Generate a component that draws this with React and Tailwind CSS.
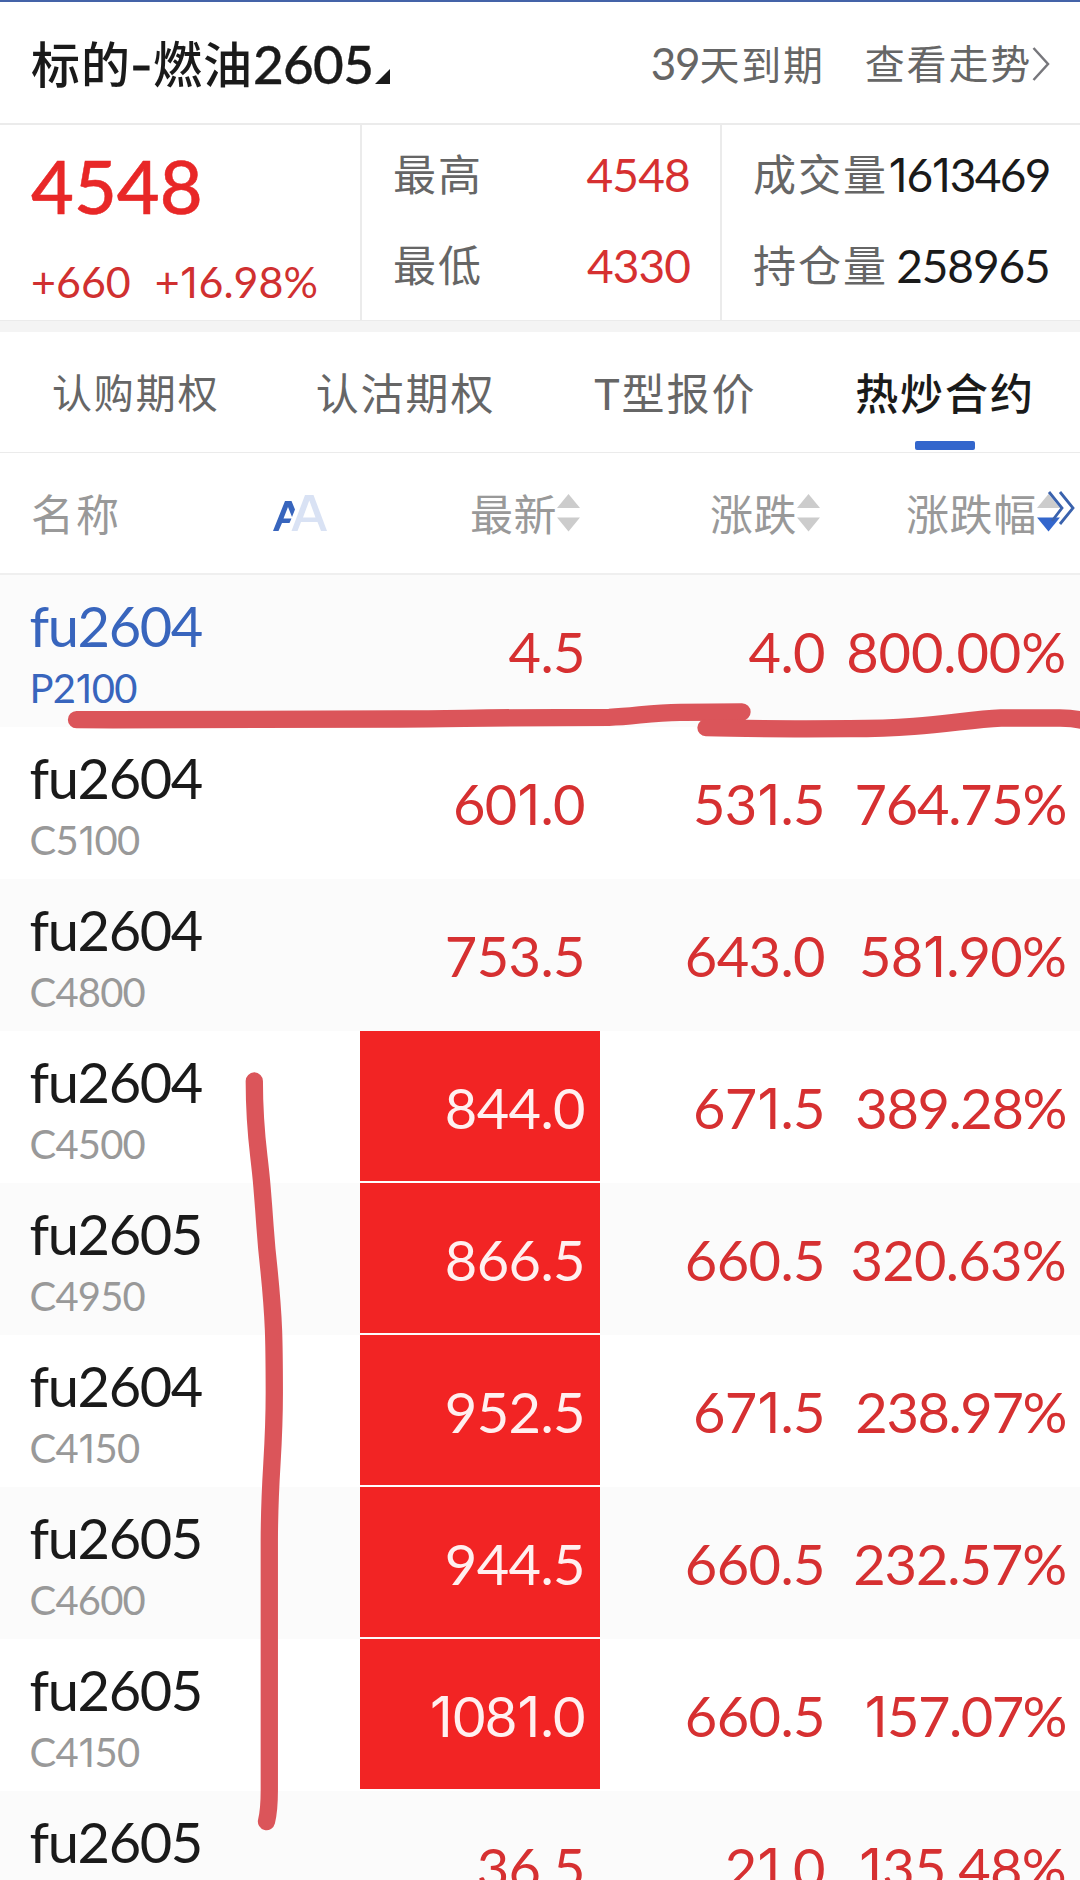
const rows = [
  { name: 'fu2604', code: 'P2100', last: '4.5', change: '4.0', pct: '800.00%', active: true, fit: 'tracking-[-0.1px]' },
  { name: 'fu2604', code: 'C5100', last: '601.0', change: '531.5', pct: '764.75%', fit: 'tracking-[-1.3px]' },
  { name: 'fu2604', code: 'C4800', last: '753.5', change: '643.0', pct: '581.90%', fit: 'tracking-[-0.8px]' },
  { name: 'fu2604', code: 'C4500', last: '844.0', change: '671.5', pct: '389.28%', flash: true, fit: 'tracking-[-1.4px]' },
  { name: 'fu2605', code: 'C4950', last: '866.5', change: '660.5', pct: '320.63%', flash: true, fit: 'tracking-[-0.7px]' },
  { name: 'fu2604', code: 'C4150', last: '952.5', change: '671.5', pct: '238.97%', flash: true, fit: 'tracking-[-1.4px]' },
  { name: 'fu2605', code: 'C4600', last: '944.5', change: '660.5', pct: '232.57%', flash: true, fit: 'tracking-[-1.1px]' },
  { name: 'fu2605', code: 'C4150', last: '1081.0', change: '660.5', pct: '157.07%', flash: true, fit: 'tracking-[-1.5px]' },
  { name: 'fu2605', code: '', last: '36.5', change: '21.0', pct: '135.48%', fit: 'tracking-[-0.7px]' },
]

// Lato has tabular figures only; Inter's 1 is narrow and has no foot
function Num({ children }) {
  return children.split(/(1)/).map((part, i) =>
    part === '1' ? <span key={i} className="font-[Inter] mx-[0.015em]">1</span> : part
  )
}

function SortArrows({ down = '#cccccc' }) {
  return (
    <svg width="23" height="38" viewBox="0 0 23 38" className="shrink-0">
      <path d="M0 14 L11.5 0 L23 14 Z" fill="#cccccc" />
      <path d="M0 23.5 L11.5 37.5 L23 23.5 Z" fill={down} />
    </svg>
  )
}

function Header() {
  return (
    <header className="h-[125px] shrink-0 border-t-2 border-t-[#4463a8] border-b-2 border-b-[#ebebeb] pl-[31px] pr-[30px] pt-[2px] flex items-center">
      <h1 className="text-[49px] leading-[60px] font-medium tracking-[1px] text-[#1a1a1a] flex items-center whitespace-nowrap">
        <span>标的</span>
        <span className="w-[22px] text-center scale-x-125 [-webkit-text-stroke:0.8px_#1a1a1a]">-</span>
        <span>燃油</span>
        <span className="text-[53px] tracking-[-0.7px] [-webkit-text-stroke:0.4px_#1a1a1a]">2605</span>
        <svg width="15" height="15" viewBox="0 0 15 15" className="mt-[25px] ml-[2px]">
          <path d="M15 0 V15 H0 Z" fill="#1a1a1a" />
        </svg>
      </h1>
      <div className="ml-auto flex items-center text-[40px] leading-[50px] tracking-[1.8px] text-[#666666] whitespace-nowrap">
        <span><span className="text-[44px] tracking-[-1.2px]">39</span>天到期</span>
        <span className="ml-[40px]">查看走势</span>
        <svg width="18" height="34" viewBox="0 0 18 34" fill="none" stroke="#77777c" strokeWidth="2.5">
          <path d="M1.5 1 L16 17 L1.5 33" />
        </svg>
      </div>
    </header>
  )
}

function Quote() {
  return (
    <section className="h-[195px] shrink-0 flex text-[43px] leading-[60px] text-[#666666] whitespace-nowrap">
      <div className="w-[362px] shrink-0 border-r-2 border-[#ebebeb] pl-[31px] pt-[17px]">
        <div className="text-[74px] leading-[88px] font-medium text-[#e82727] [-webkit-text-stroke:0.5px_#e82727]">4548</div>
        <div className="mt-[22px] leading-[60px] flex gap-[24px] text-[#d03030] text-[43px]">
          <span>+660</span>
          <span><Num>+16.98%</Num></span>
        </div>
      </div>
      <div className="w-[360px] shrink-0 border-r-2 border-[#ebebeb] pl-[31px] pr-[30px] pt-[20px]">
        <div className="flex justify-between h-[91px]">
          <span className="tracking-[2px]">最高</span>
          <span className="text-[46px] tracking-[-0.8px] text-[#d63031]">4548</span>
        </div>
        <div className="flex justify-between">
          <span className="tracking-[2px]">最低</span>
          <span className="text-[46px] tracking-[-0.9px] text-[#d63031]">4330</span>
        </div>
      </div>
      <div className="flex-1 pl-[31px] pr-[31px] pt-[20px]">
        <div className="flex justify-between h-[91px]">
          <span className="tracking-[2px]">成交量</span>
          <span className="text-[46px] text-[#1a1a1a] tracking-[-1.7px]"><Num>1613469</Num></span>
        </div>
        <div className="flex justify-between">
          <span className="tracking-[2px]">持仓量</span>
          <span className="text-[46px] text-[#1a1a1a] tracking-[-1.1px]">258965</span>
        </div>
      </div>
    </section>
  )
}

function Tabs() {
  return (
    <nav className="h-[121px] shrink-0 border-b border-[#ebebeb] pl-[1px] grid grid-cols-4 justify-items-center text-[43px] leading-[123px] tracking-[2px] text-[#666666] whitespace-nowrap">
      <span className="text-[40px]">认购期权</span>
      <span>认沽期权</span>
      <span>T型报价</span>
      <span className="relative font-medium text-[#1a1a1a]">
        热炒合约
        <i className="absolute left-[60px] top-[109px] w-[60px] h-[9px] rounded-[2px] bg-[#3366cc]" />
      </span>
    </nav>
  )
}

function TableHead() {
  return (
    <div className="h-[122px] shrink-0 border-b-2 border-[#efefef] flex items-center text-[43px] leading-[60px] tracking-[2px] text-[#999999] whitespace-nowrap">
      <div className="w-[360px] pl-[31px] flex items-center">
        <span className="pt-[3px]">名称</span>
        <svg width="54" height="36" viewBox="0 0 54 36" className="ml-auto mr-[33px]">
          <path fillRule="evenodd" fill="#3865bd" d="M0 36 L12 6 H18.5 L22 14.5 L19 22 L15 12 L10.5 23.5 H18.5 L16.5 28 H9 L5.5 36 Z" />
          <path fillRule="evenodd" fill="#d9e2f4" d="M18.5 36 L32 0 H40.5 L54 36 H48 L44.5 27 H28 L24.5 36 Z M30 22.5 H42.5 L36.3 5.5 Z" />
        </svg>
      </div>
      <div className="w-[240px] pr-[20px] flex items-center justify-end"><span className="pt-[3px] tracking-[0.5px]">最新</span><SortArrows /></div>
      <div className="w-[240px] pr-[20px] flex items-center justify-end"><span className="pt-[3px] tracking-[0.5px]">涨跌</span><SortArrows /></div>
      <div className="relative w-[240px] pr-[20px] flex items-center justify-end">
        <span className="pt-[3px] tracking-[0.7px]">涨跌幅</span><SortArrows down="#3366cc" />
        <svg width="28" height="34" viewBox="0 0 28 34" fill="none" stroke="#3a62ad" strokeWidth="2.8" className="absolute right-[5px] top-[9px]">
          <path d="M2 1 L15 17 L5 30" />
          <path d="M13 1 L26 17 L13 33" />
        </svg>
      </div>
    </div>
  )
}

function Row({ row }) {
  return (
    <div className="h-[152px] shrink-0 flex odd:bg-[#fbfbfb] text-[56px] leading-[154px] tracking-[-0.6px] text-[#d63031] whitespace-nowrap">
      <div className={`w-[360px] pl-[29.5px] pt-[18px] ${row.active ? 'text-[#3865bd]' : 'text-[#1a1a1a]'}`}>
        <div className="leading-[66px] tracking-[-1.4px]">{row.name}</div>
        {row.code && (
          <div className={`text-[40px] leading-[58px] tracking-[-0.8px] ${row.active ? '' : 'text-[#999999]'}`}><Num>{row.code}</Num></div>
        )}
      </div>
      <div className={`w-[240px] h-[150px] pr-[15px] text-right ${row.flash ? 'bg-[#f22424] text-[#fff0f0]' : ''}`}><Num>{row.last}</Num></div>
      <div className="w-[240px] pr-[15px] text-right"><Num>{row.change}</Num></div>
      <div className={`w-[240px] pr-[14px] text-right ${row.fit}`}><Num>{row.pct}</Num></div>
    </div>
  )
}

// freehand marker strokes over the table
function Marks() {
  return (
    <svg width="1080" height="1880" viewBox="0 0 1080 1880" className="absolute left-0 top-0 pointer-events-none" fill="none" stroke="#db555a" strokeWidth="17.3" strokeLinecap="round" strokeLinejoin="round">
      <path d="M76.5 719.7 C200 720 330 719.5 400 719 S500 717.3 609 717.3 C635 716.5 650 712.5 680 712.3 L742 712" />
      <path d="M706 727.7 C730 728.5 780 729 850 728.7 C930 728.5 960 720 1001 718 L1060 718 Q1074 718 1084 721" />
      <path d="M254.3 1081 C254.3 1135 259 1150 262 1187 C266 1235 265 1235 269 1270 C274 1320 274.2 1340 274.3 1390 C274.5 1455 269.5 1470 269.3 1540 L269.3 1790 Q269.3 1810 266.5 1821.5" />
    </svg>
  )
}

export default function App() {
  return (
    <div className="relative w-[1080px] h-[1880px] overflow-hidden bg-white flex flex-col font-[Lato,'Noto_Sans_CJK_SC',sans-serif]">
      <Header />
      <Quote />
      <div className="h-[12px] shrink-0 bg-[#f4f4f4] border-t border-[#ebebeb]" />
      <Tabs />
      <TableHead />
      <div className="flex flex-col">
        {rows.map((row, i) => <Row key={i} row={row} />)}
      </div>
      <Marks />
    </div>
  )
}
